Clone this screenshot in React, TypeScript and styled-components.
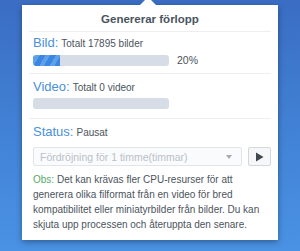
import React from 'react';
import styled, { createGlobalStyle } from 'styled-components';

const GlobalStyle = createGlobalStyle`
  html, body {
    margin: 0;
    padding: 0;
  }
  body {
    width: 300px;
    height: 251px;
    overflow: hidden;
    background: linear-gradient(180deg, #3a6dc3 0%, #4283d6 55%, #4a92e4 100%);
    font-family: "Liberation Sans", Arial, sans-serif;
  }
`;

const Page = styled.div`
    padding: 5px 22px 0 22px;
  `,
  Panel = styled.div`
    position: relative;
    background: #ffffff;
    padding: 0 7px 8px 7px;
    box-shadow: 0 2px 6px rgba(0, 0, 0, 0.35);
  `,
  Arrow = styled.div`
    position: absolute;
    top: -8px;
    left: 118px;
    width: 0;
    height: 0;
    border-left: 8px solid transparent;
    border-right: 8px solid transparent;
    border-bottom: 8px solid #ffffff;
  `,
  Header = styled.div`
    height: 26px;
    line-height: 29px;
    text-align: center;
    font-size: 11.5px;
    font-weight: 700;
    color: #4a545e;
    border-bottom: 1px solid #eceff2;
  `,
  Section = styled.div<{ $top: number; $bottom: number; $line?: boolean }>`
    padding: ${(p) => p.$top}px 0 ${(p) => p.$bottom}px 4px;
    border-bottom: ${(p) => (p.$line ? '1px solid #eceff2' : 'none')};
  `,
  LabelRow = styled.div`
    height: 14px;
    display: flex;
    align-items: baseline;
    gap: 3px;
    line-height: 14px;
  `,
  Label = styled.span`
    font-size: 13px;
    color: #4a90dc;
  `,
  Value = styled.span`
    font-size: 10px;
    color: #4c545c;
  `,
  BarRow = styled.div`
    display: flex;
    align-items: center;
    gap: 8px;
    margin-top: 4px;
  `,
  Bar = styled.div`
    width: 136px;
    height: 11px;
    border-radius: 3px;
    background: #d6dde6;
    overflow: hidden;
  `,
  Fill = styled.div`
    height: 100%;
    border-radius: 3px 0 0 3px;
    background: repeating-linear-gradient(
      -60deg,
      #3a86e0 0px,
      #3a86e0 5px,
      #5fa0ea 5px,
      #5fa0ea 9px
    );
  `,
  Percent = styled.span`
    font-size: 10.5px;
    color: #4a525a;
  `,
  Controls = styled.div`
    display: flex;
    gap: 6px;
    margin-top: 8px;
  `,
  Select = styled.div`
    box-sizing: border-box;
    width: 209px;
    height: 19px;
    border: 1px solid #e1e5ea;
    border-radius: 2px;
    background: #fafbfc;
    display: flex;
    align-items: center;
    justify-content: space-between;
    padding: 0 9px 0 6px;
    font-size: 10.5px;
    color: #b9c0c8;
  `,
  Caret = styled.span`
    width: 0;
    height: 0;
    border-left: 3.5px solid transparent;
    border-right: 3.5px solid transparent;
    border-top: 4px solid #a3abb4;
  `,
  PlayButton = styled.button`
    box-sizing: border-box;
    width: 23px;
    height: 19px;
    padding: 0;
    border: 1px solid #d3d8de;
    border-radius: 2px;
    background: #f6f7f9;
    display: flex;
    align-items: center;
    justify-content: center;
  `,
  Note = styled.p`
    margin: 6px 0 0 0;
    font-size: 10px;
    line-height: 15px;
    color: #4c545c;
  `,
  NoteLabel = styled.span`
    color: #55aa6a;
  `;

function Progress({ label, total, percent }: { label: string; total: string; percent?: number }) {
  return (
    <>
      <LabelRow>
        <Label>{label}:</Label>
        <Value>{total}</Value>
      </LabelRow>
      <BarRow>
        <Bar>{percent ? <Fill style={{ width: `${percent}%` }} /> : null}</Bar>
        {percent !== undefined && <Percent>{percent}%</Percent>}
      </BarRow>
    </>
  );
}

export default function App(): JSX.Element {
  return (
    <Page>
      <GlobalStyle />
      <Panel>
        <Arrow />
        <Header>Genererar förlopp</Header>
        <Section $top={4} $bottom={7} $line>
          <Progress label="Bild" total="Totalt 17895 bilder" percent={20} />
        </Section>
        <Section $top={6} $bottom={9} $line>
          <Progress label="Video" total="Totalt 0 videor" />
        </Section>
        <Section $top={6} $bottom={0}>
          <LabelRow>
            <Label>Status:</Label>
            <Value>Pausat</Value>
          </LabelRow>
          <Controls>
            <Select>
              Fördröjning för 1 timme(timmar)
              <Caret />
            </Select>
            <PlayButton aria-label="Starta">
              <svg width="9" height="10" viewBox="0 0 9 10">
                <path d="M1 0.5 L8.5 5 L1 9.5 Z" fill="#3f474f" />
              </svg>
            </PlayButton>
          </Controls>
          <Note>
            <NoteLabel>Obs:</NoteLabel> Det kan krävas fler CPU-resurser för att generera olika
            filformat från en video för bred kompatibilitet eller miniatyrbilder från bilder. Du
            kan skjuta upp processen och återuppta den senare.
          </Note>
        </Section>
      </Panel>
    </Page>
  );
}
